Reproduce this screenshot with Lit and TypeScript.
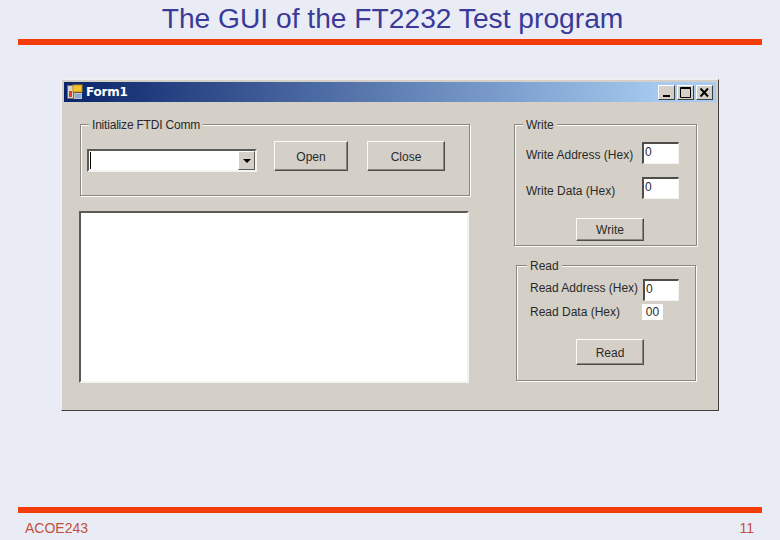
import { LitElement, html, css } from "lit";
import { customElement } from "lit/decorators.js";

@customElement("app-root")
export class AppRoot extends LitElement {
  static styles = css`
    :host {
      display: flex;
      flex-direction: column;
      width: 780px;
      height: 540px;
      overflow: hidden;
      background: #eaecf5;
      font-family: "Liberation Sans", Arial, sans-serif;
    }
    .slide-title {
      height: 39px;
      margin: 0;
      text-align: center;
      font-size: 28.2px;
      font-weight: 400;
      line-height: 36px;
      color: #3a3a98;
      padding-left: 5px;
      box-sizing: border-box;
    }
    .rule {
      height: 6px;
      margin: 0 18px;
      background: #f33c0a;
      flex: none;
    }
    .stage {
      flex: 1;
      padding: 34px 0 0 61px;
    }
    .footer {
      display: flex;
      justify-content: space-between;
      padding: 6px 26px 0 25px;
      height: 27px;
      box-sizing: border-box;
      font-size: 14px;
      line-height: 18px;
      color: #c2503c;
    }

    .window {
      width: 658px;
      height: 332px;
      box-sizing: border-box;
      background: #d4d0c8;
      border: 1px solid;
      border-color: #f0f0ee #404040 #404040 #f0f0ee;
      padding: 2px;
      display: flex;
      flex-direction: column;
      color: #2a2a2a;
      font-size: 12px;
    }
    .titlebar {
      height: 20px;
      flex: none;
      display: flex;
      align-items: center;
      background: linear-gradient(90deg, #0a246a, #a6caf0 92%);
      padding: 0 3px 0 3px;
    }
    .app-icon {
      width: 16px;
      height: 16px;
      flex: none;
    }
    .caption {
      margin-left: 3px;
      flex: 1;
      color: #fff;
      font: 700 12px "DejaVu Sans", sans-serif;
      letter-spacing: -0.2px;
    }
    .win-btn {
      width: 17px;
      height: 15px;
      margin-left: 2px;
      display: block;
      box-sizing: border-box;
      background: #d4d0c8;
      border: 1px solid;
      border-color: #fff #404040 #404040 #fff;
    }
    .content {
      flex: 1;
      display: flex;
      gap: 44px;
      padding: 15px 0 0 16px;
    }
    .left {
      width: 390px;
    }
    .right {
      width: 183px;
    }

    fieldset {
      margin: 0;
      padding: 0;
      box-sizing: border-box;
      min-width: 0;
      border: 1px solid #8a8883;
      box-shadow: inset 1px 1px 0 #fbfbf9, 1px 1px 0 #fbfbf9;
    }
    legend {
      padding: 2px 3px 0;
      line-height: 12px;
      background: #d4d0c8;
      color: #2a2a2a;
    }
    .comm {
      height: 79px;
      display: flex;
      align-items: flex-start;
      padding: 10px 0 0 6px;
    }
    .comm legend {
      margin-left: 2px;
      letter-spacing: -0.2px;
    }
    .combo {
      width: 170px;
      height: 23px;
      box-sizing: border-box;
      margin-top: 8px;
      background: #fff;
      border: 2px solid;
      border-color: #5a5a56 #f4f4f2 #f4f4f2 #5a5a56;
      display: flex;
      justify-content: space-between;
      align-items: stretch;
    }
    .caret {
      width: 1px;
      margin: 1px 0 1px 1px;
      background: #000;
    }
    .drop {
      width: 17px;
      box-sizing: border-box;
      background: #d4d0c8;
      border: 1px solid;
      border-color: #fff #5a5a56 #5a5a56 #fff;
      display: grid;
      place-items: center;
    }
    .arrow {
      width: 0;
      height: 0;
      border: 4px solid transparent;
      border-top: 4px solid #000;
      border-bottom: 0;
    }
    button {
      font: inherit;
      color: #2a2a2a;
      padding: 1px 0 0;
      background: #d4d0c8;
      box-sizing: border-box;
      border: 1px solid;
      border-color: #fbfbf9 #4e4d4a #4e4d4a #fbfbf9;
      box-shadow: inset -1px -1px 0 #8a8883;
    }
    .open {
      width: 74px;
      height: 30px;
      margin-left: 17px;
    }
    .close {
      width: 78px;
      height: 30px;
      margin-left: 19px;
    }
    .log {
      height: 172px;
      margin: 15px 1px 0 -1px;
      box-sizing: border-box;
      background: #fff;
      border: 2px solid;
      border-color: #5a5a56 #f4f4f2 #f4f4f2 #5a5a56;
    }

    .write {
      height: 129px;
      display: flex;
      flex-direction: column;
      padding: 11px 0 0 11px;
    }
    .write legend {
      margin-left: -3px;
    }
    .read {
      height: 123px;
      width: 180px;
      margin: 12px 0 0 2px;
      display: flex;
      flex-direction: column;
      padding: 7px 0 0 13px;
    }
    .read legend {
      margin-left: -3px;
    }
    .row {
      display: flex;
      align-items: center;
    }
    .row span {
      flex: none;
    }
    .write .row span {
      width: 116px;
      padding-top: 4px;
    }
    .write .gap-write span {
      padding-top: 6px;
    }
    .read .row span {
      width: 113px;
      padding-bottom: 4px;
    }
    .read .gap-read span {
      width: 112px;
      padding-bottom: 0;
    }
    .field {
      box-sizing: border-box;
      background: #fff;
      border: 1px solid;
      border-color: #4e4d4a #f4f4f2 #f4f4f2 #4e4d4a;
      border-width: 2px 1px 1px 2px;
      padding: 0 0 0 1px;
      line-height: 16px;
      height: 22px;
      width: 37px;
    }
    .read .field {
      width: 36px;
    }
    .output {
      background: #fff;
      width: 21px;
      height: 16px;
      line-height: 16px;
      text-align: center;
    }
    .action {
      width: 68px;
      align-self: flex-start;
    }
    .write .action {
      height: 23px;
      margin: 19px 0 0 50px;
    }
    .read .action {
      height: 26px;
      margin: 19px 0 0 46px;
    }
    .gap-write {
      margin-top: 13px;
    }
    .gap-read {
      margin-top: 3px;
    }
  `;

  render() {
    return html`
      <h1 class="slide-title">The GUI of the FT2232 Test program</h1>
      <div class="rule"></div>
      <main class="stage">
        <section class="window">
          <header class="titlebar">
            <svg class="app-icon" viewBox="0 0 16 16">
              <rect x="0.5" y="1.5" width="6" height="13" fill="#d8d4cc" stroke="#6a6a78" />
              <rect x="2" y="7" width="3" height="6" fill="#d8402a" />
              <rect x="6" y="1" width="9" height="7" fill="#f5c52f" stroke="#c08a18" />
              <rect x="7.5" y="9.5" width="7" height="5" fill="#8aa8d8" stroke="#c8c4b8" />
            </svg>
            <span class="caption">Form1</span>
            <span class="win-btn">
              <svg viewBox="0 0 15 13" width="15" height="13"><rect x="4" y="9" width="7" height="2" fill="#000" /></svg>
            </span>
            <span class="win-btn">
              <svg viewBox="0 0 15 13" width="15" height="13"><path d="M2.5 1.5h10v10h-10z M2 2.5h11" fill="none" stroke="#000" /></svg>
            </span>
            <span class="win-btn">
              <svg viewBox="0 0 15 13" width="15" height="13"><path d="M3.5 2.5l7.5 8M11 2.5l-7.5 8" fill="none" stroke="#000" stroke-width="1.9" /></svg>
            </span>
          </header>
          <div class="content">
            <div class="left">
              <fieldset class="comm">
                <legend>Initialize FTDI Comm</legend>
                <div class="combo">
                  <i class="caret"></i>
                  <span class="drop"><i class="arrow"></i></span>
                </div>
                <button class="open">Open</button>
                <button class="close">Close</button>
              </fieldset>
              <div class="log"></div>
            </div>
            <div class="right">
              <fieldset class="write">
                <legend>Write</legend>
                <div class="row"><span>Write Address (Hex)</span><div class="field">0</div></div>
                <div class="row gap-write"><span>Write Data (Hex)</span><div class="field">0</div></div>
                <button class="action">Write</button>
              </fieldset>
              <fieldset class="read">
                <legend>Read</legend>
                <div class="row"><span>Read Address (Hex)</span><div class="field">0</div></div>
                <div class="row gap-read"><span>Read Data (Hex)</span><div class="output">00</div></div>
                <button class="action">Read</button>
              </fieldset>
            </div>
          </div>
        </section>
      </main>
      <div class="rule"></div>
      <footer class="footer"><span>ACOE243</span><span>11</span></footer>
    `;
  }
}
